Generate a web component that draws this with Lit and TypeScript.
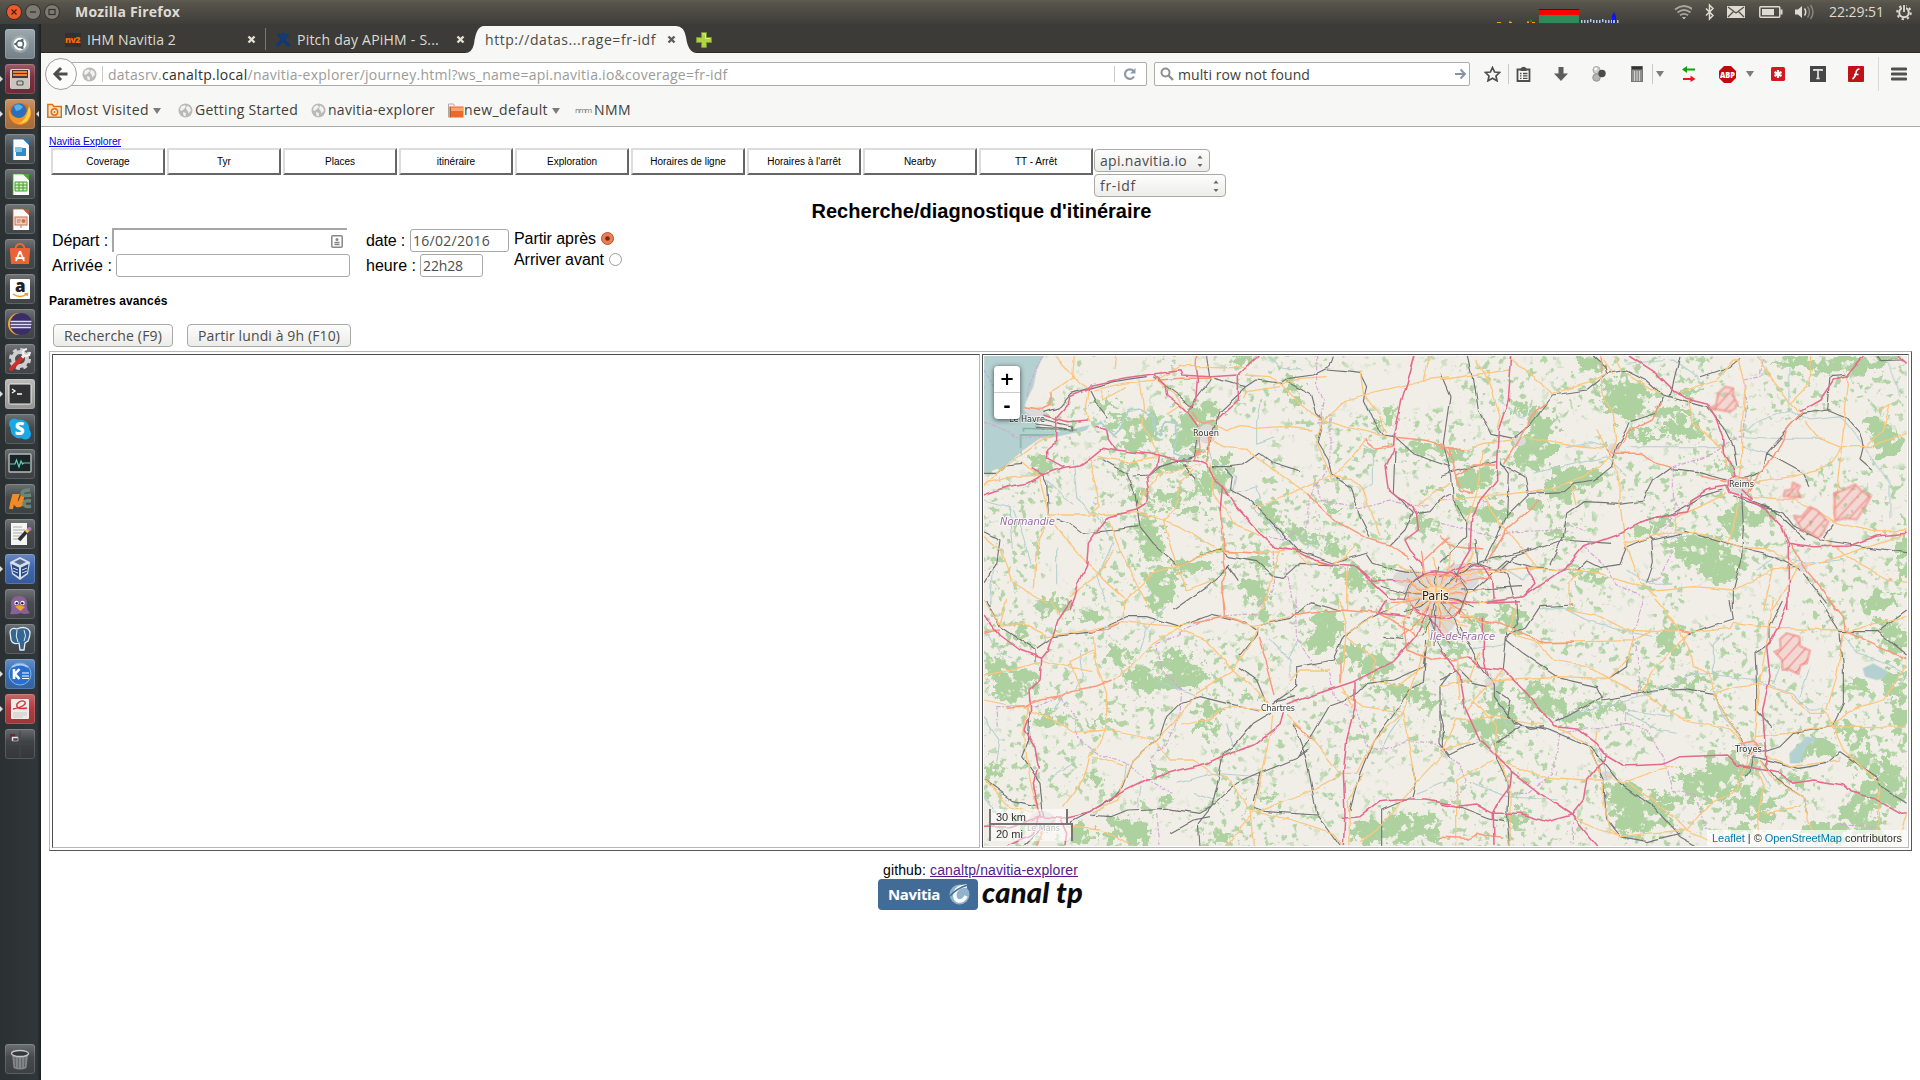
import { LitElement, html, svg, css } from "lit";
import { customElement, property } from "lit/decorators.js";
import { unsafeSVG } from "lit/directives/unsafe-svg.js";

/** Single line of text whose tracking is adjusted to fill a given width. */
@customElement("fit-text")
export class FitText extends LitElement {
  @property({ type: Number }) w = 0;
  static styles = css`
    :host { display: inline-block; white-space: pre; flex: none; }
  `;
  firstUpdated() {
    const span = this.renderRoot.querySelector("span")!;
    const n = (this.textContent ?? "").length;
    const natural = span.getBoundingClientRect().width;
    if (n && this.w) this.style.letterSpacing = `${(this.w - natural) / n}px`;
  }
  render() {
    return html`<span><slot></slot></span>`;
  }
}

const pic = (w: number, h: number, body: string, vb = `0 0 ${w} ${h}`) =>
  html`<svg width=${w} height=${h} viewBox=${vb} fill="none">${unsafeSVG(body)}</svg>`;

/* ------------------------------------------------------------------ map */

interface Sheet {
  at: string;
  wood: string;
  rail: string;
  primary: string;
  trunk: string;
  motor: string;
  stream: string;
  border: string;
  zone: string;
}

const NW: Sheet = {
  at: "scale(.33333) translate(-12 -18)",
  wood: "790,25,35,18 480,235,48,38 460,275,40,18 615,255,22,48 670,200,44,26 690,180,45,16 585,350,46,16 600,290,26,26 720,380,26,38 690,400,48,20 625,430,55,10 550,440,45,16 540,475,30,10 170,330,32,18 200,345,20,14 370,160,36,12 410,210,30,10 640,490,40,12 500,540,28,36 520,590,34,34 545,690,52,40 540,750,40,28 860,480,30,24 890,520,22,18 940,120,26,22 1020,570,45,16 1070,600,45,12 1340,295,46,20 1230,190,20,16 1190,230,26,12 1360,410,22,16 1230,650,30,14 1100,670,36,18 1150,700,36,22 640,650,45,20 840,640,36,12 820,715,40,18 950,555,36,16 1060,480,30,8 1330,520,46,18 450,355,28,12 470,440,18,24 740,320,22,12 660,310,18,18",
  rail: "190,185 240,170 275,130 325,115 400,95 500,80|330,120 350,160 385,205|520,80 560,110 600,140 640,175 645,150 690,90 680,18|700,85 800,110 830,90 905,100 925,85 1000,75 1050,50 1060,20|1040,60 1100,65 1140,70 1160,110 1150,150 1175,205 1210,255 1245,260 1300,310 1350,330 1410,350|920,95 995,135 1010,190 1030,210 1015,280 1045,330 1055,375 1110,410 1140,500 1170,560|800,110 720,185 690,260 685,300|12,370 50,370 80,345 130,340|205,495 200,400 185,370|370,330 440,370 465,430 475,500 480,530 520,580 595,648|530,350 580,335 640,320 650,270|455,378 510,375 540,350|595,648 650,620 720,600 745,620 830,635 880,680 910,685 960,640 1060,645|610,340 630,370 650,390|690,350 750,350 790,345 840,310 880,340 960,365|735,355 760,380 755,420 800,445 850,490 910,555 950,600 1060,640 1160,610 1180,640 1230,655 1320,670|230,510 270,520 310,550 400,540 475,530|12,545 60,570 50,640 12,700|1310,490 1350,485 1390,440 1410,430|1230,585 1275,540 1300,490 1240,430 1245,300|580,780 680,710 750,645|745,650 775,695|155,215 200,210 275,228 275,240 170,235|165,225 260,236|185,205 245,222",
  primary: "12,410 60,360 130,310 190,265 225,260|230,18 280,80 240,110 205,130|280,18 275,80 325,115|410,18 405,60|340,120 430,100 530,90 600,50 770,50 800,60|325,115 315,180 330,215|480,90 490,170 490,220 520,290 540,315|530,90 590,140 620,185|795,75 870,80 905,105 950,150 985,180 1030,210 1010,280 1050,370 1060,400|1030,210 1090,230 1160,245 1220,260|1030,210 1100,150 1150,135 1200,125 1330,90 1410,80|1140,60 1150,130 1200,200 1220,250|1060,380 1120,320 1160,265|1050,380 1110,385 1150,420 1170,480 1200,560|1055,375 965,415 880,450 810,475|685,265 740,290 800,295 840,330 960,415 990,435|700,225 740,245 780,230 830,235 900,230 1000,240|690,340 700,430 740,480 760,520 850,560|640,360 600,400 585,480 550,510 593,650|475,488 550,510 600,530 680,580 715,600|12,400 100,380 185,375|205,495 340,495 475,488|205,495 260,570 330,650 440,750|205,495 190,540 165,610 160,720|325,318 350,420 360,470 330,490|130,340 180,385 205,495|350,320 440,335 530,320|715,605 650,620 593,650 520,670 440,750|715,605 820,608 930,600|945,602 980,640 1040,640|1060,640 1100,620 1125,590|385,510 420,600 450,660 510,780|12,560 60,600 100,700 200,760|593,650 620,720 700,690|1410,400 1360,430 1310,470|1330,90 1345,18|470,480 485,440 540,370 650,345|900,600 870,700 850,780|1100,650 1100,780|270,740 350,680 400,600|790,145 800,125 900,110|905,105 960,85 1040,80|600,165 560,190|360,120 370,150 440,110",
  trunk: "130,170 180,178 210,165 210,130|650,18 648,60|655,215 670,220 700,210|655,245 660,290 650,325|685,245 688,300 680,340|720,480 730,560 732,630 740,670 722,700 735,780|985,435 1030,480 1080,520 1160,565 1230,585 1290,625|1160,265 1185,295 1240,285|1245,262 1330,270 1390,285 1410,320|735,604 840,610|1325,640 1410,560|540,90 600,85 690,85|640,190 655,215|640,330 650,300 680,305",
  motor: "12,435 80,410 140,400 185,375 250,352 300,345 330,325 370,292 410,300 450,305 535,315 600,330 650,333 680,345 700,385 727,412 760,460 800,505 850,560 885,592 945,602 1000,630 1060,645 1130,650 1180,690 1240,692 1300,700|185,375 155,355|250,352 200,325 200,300 230,275 230,200 265,160 270,140 325,118 335,105 430,85 520,72 600,62 605,75 690,80 775,75 835,18|775,75 775,150 735,185 710,210|520,72 555,105 560,135 600,165 625,190 655,230|650,60 655,90 650,150 625,190|190,195 265,215 325,210|345,228 380,240 385,265 410,300|535,315 530,350 500,385 505,420 495,465 470,480 385,500 360,530 325,580 320,650 295,700 285,740 270,780|727,412 720,480|1305,18 1290,70 1265,150 1255,200 1243,255 1240,300 1215,350 1225,420 1250,440 1290,465 1310,495 1315,540 1275,570 1290,600 1325,640 1330,680|1130,650 1180,700 1230,745 1290,750",
  stream: "345,228 360,215 400,255 420,235 445,185 480,180 520,200 525,240 545,255 555,215 590,220 590,270 585,310 620,325 640,310 660,260 680,240 690,300 700,340 740,350 770,380 760,430 830,410 840,440 810,470 870,520 920,580 980,560 1000,570 980,600|840,160 830,210 830,280 880,260|280,330 290,440 330,490|200,390 250,440 280,460|12,450 90,470 100,600|870,20 900,50 960,60|1150,280 1180,300 1180,400 1150,420|100,480 130,560 150,640|350,500 400,580 350,680 380,760|40,660 30,780|230,590 230,700",
  border: "1010,18 1010,100 1030,150 1020,220 1050,190 1050,350 1015,400 1020,450 1130,475 1230,450 1290,470 1350,465|1010,400 985,470 980,530 910,570 860,560|880,600 880,720 830,780|920,650 940,780|190,18 165,70 140,140|12,215 120,265 220,255",
  zone: "",
};

const NE: Sheet = {
  at: "translate(456 -6) scale(.33333)",
  wood: "550,130,65,42 560,180,56,24 310,220,42,34 280,300,56,44 240,330,28,22 100,390,52,30 150,485,45,30 70,480,36,26 410,380,66,30 360,420,46,26 280,460,28,18 730,235,55,26 690,180,50,18 890,510,42,40 960,500,40,22 790,600,75,38 840,650,55,40 700,580,36,14 1340,280,34,44 1300,220,28,26 1100,40,46,16 1060,30,46,12 1260,50,56,16 1200,40,46,20 750,130,36,12 600,550,36,12 660,520,36,12 1390,620,14,70 480,690,28,16 60,320,28,18 350,550,28,12 450,50,36,16 250,170,26,12 620,260,60,10 1320,755,56,22 430,670,36,12 840,350,26,14 1390,520,12,20 1340,30,40,14",
  rail: "85,18 100,80 115,180 150,250 220,265|0,70 30,140 10,280 35,380 40,450 80,520 80,560 0,640|220,265 270,225 340,135 440,120 500,70 560,60 620,90 670,135 690,140 720,18|690,140 800,170 850,230 880,290 890,350|670,140 650,190 570,215 560,245 530,290 515,350 465,390 400,400 370,425 270,430 200,500|180,335 205,370 200,500 130,640|180,340 255,380 265,430|0,380 60,360 170,335|860,390 770,365 690,355 640,390 610,450 540,460 430,455 380,490 370,560 330,640|905,385 970,360 980,310 1060,220 1090,190 1160,180 1220,205 1260,250 1270,290 1260,330 1295,360|980,310 1090,370 1110,410|850,420 780,440 700,490 600,520|905,430 910,530 905,620 880,720 880,780|930,450 1030,490 1060,530 1140,570 1400,608|880,440 1000,480 1095,570|780,80 870,50 900,25|1160,180 1170,80 1230,75|1090,670 1160,760|1080,660 1000,620 870,585 740,545 640,570 630,560 560,590 540,640 480,650 440,630 410,660 270,650 200,630 100,720|510,580 370,570 220,620 180,660|635,570 640,640 620,700|0,720 100,640 270,600|1180,520 1150,565|60,720 250,710|460,18 495,50 500,70|1310,18 1320,32 1390,30|105,570 110,640 200,670 220,740",
  primary: "0,90 130,70 210,60|210,25 340,130|340,130 440,100 500,70|110,30 150,100 180,200 170,240|485,75 485,130 520,190 530,270 515,310|560,70 660,130|745,150 760,220 850,300 860,360|710,130 830,90 880,30 900,30|895,30 915,110 905,250 905,340 895,390|950,18 1000,100 1050,160 1080,185|1205,290 1215,190 1225,100 1210,60|1095,215 1130,260 1205,290 1300,290 1400,250|1205,290 1160,350 1060,380 940,395|1205,290 1180,500|70,300 130,280 220,270|250,260 400,285 490,295|515,320 430,380 350,410 270,425 130,440 0,450|515,320 540,400 540,460 555,580 600,700 650,740|130,300 110,430 80,520|130,440 190,530 290,650|405,465 390,400|940,440 1060,450 1130,480 1180,515 1300,545 1400,540|893,440 885,500 865,575|705,545 710,500 800,460 860,430|555,580 600,570 630,560 700,545 800,555 900,595 1000,600 1070,650|1090,650 1200,620 1280,590 1400,550|1150,570 1250,640 1340,690 1400,700|230,655 370,655 480,670 600,710|640,720 760,710 880,720 1000,660 1080,650|415,660 390,700 390,780|290,650 200,660 0,680|1000,780 1070,650|470,235 500,300|1115,18 1110,100 1050,160|520,18 540,60|480,18 520,75|1320,180 1350,160 1330,240 1280,290|970,780 1000,660",
  trunk: "0,290 70,300|25,290 50,380 60,420 100,430|165,345 100,345 50,380|190,340 235,270 285,185 320,160|500,300 515,320|530,300 570,245 640,210 665,160|480,18 485,70|515,310 600,310 650,340 700,355|780,378 860,395|940,390 1000,320 1050,230 1090,185|1050,580 1090,650 1150,720 1190,780|300,450 200,540 140,640|60,660 200,655|0,560 50,590 130,600|875,380 920,385 940,400 920,430",
  motor: "215,18 205,150 175,240 170,340 170,390 120,450 95,510 90,600 60,650|570,18 650,70 700,120 740,145 800,160 830,210 848,260 850,310 880,360 885,380 865,395 865,410|1270,18 1220,80 1180,90 1140,150 1080,185|860,408 800,420 750,450 740,485 690,495 600,520 530,555 430,590 390,640 350,670 250,740 120,760 0,745|860,408 870,430 920,445 980,480 1025,530 1045,580 1045,700 1043,780|1045,580 1120,590 1230,588 1310,558 1400,550|1375,18 1400,40|60,650 45,700|0,680 90,640 130,650 155,690 160,750|255,650 285,700 250,740|905,418 935,445",
  stream: "1050,50 1045,180 940,220 920,240|1050,180 1110,210 1200,200 1280,300 1350,400 1350,500|905,260 1000,265 1150,265|910,290 990,310|180,150 240,200 290,190|380,290 450,275 500,290|560,290 700,290 830,290 850,280|280,370 500,320 560,380|560,40 700,30 770,80 790,110|200,660 250,690 280,640|950,660 1000,620 1100,640 1200,630|1340,20 1370,100 1380,140|560,660 620,700 700,700|660,560 760,560",
  border: "970,30 960,80 910,90 920,170 910,260 860,280 800,320 700,350 700,440 720,480 650,550|0,520 80,540 160,560 230,545 360,540 380,520 440,540|430,590 500,650 530,700 600,740|700,600 660,680 620,700",
  zone: "810,175 828,165 835,130 855,110 880,115 878,135 892,160 885,175 870,185 840,180|1030,438 1035,422 1055,418 1058,398 1080,408 1072,422 1082,442 1050,440|1062,498 1085,500 1110,470 1130,480 1165,515 1150,545 1135,565 1110,548 1085,540|1183,430 1215,418 1245,403 1262,420 1292,440 1275,470 1250,508 1215,505 1185,512",
};

const SW: Sheet = {
  at: "translate(-4 244) scale(.33333)",
  wood: "210,20,46,20 320,50,42,22 120,85,28,18 60,200,34,24 110,240,62,30 90,280,46,18 420,165,32,26 460,230,26,32 510,250,34,30 590,200,52,34 640,230,46,28 570,250,36,16 210,360,46,22 370,365,32,12 680,330,36,26 680,385,36,10 1040,70,44,36 1020,120,36,34 1140,170,52,28 1200,200,40,26 1100,150,28,16 1160,245,26,16 40,510,28,16 440,680,52,26 460,700,44,30 380,705,26,16 720,710,36,16 300,700,26,26 860,590,22,12 1160,690,50,34 1270,670,55,28 1330,690,46,30 1240,700,55,30 850,20,18,34 1270,270,56,18 1330,300,40,16 820,290,28,10 540,520,22,12 550,600,22,16 345,530,14,18 1330,60,20,14",
  rail: "20,0 60,80 165,150 165,185|150,330 145,420 125,470 180,550 190,650|170,145 220,110 340,95 440,50 500,50 600,80 690,45 800,70 830,90 830,100 780,165|840,75 930,55 990,5|780,205 830,240 855,300|840,330 740,310 660,290 600,310 560,350 540,410 460,480 430,560 395,600 270,665|870,340 820,370 760,440 730,460 710,560 695,620 660,640 560,625 440,630 390,650 330,645|695,620 770,550 850,515 950,475 1000,400 1050,315 1120,290 1160,250 1240,240 1330,200 1335,150|940,375 980,480 1010,640 1080,738|820,600 840,520|660,738 655,670 695,620|570,700 640,660 690,650|820,620 860,635 1010,645|880,310 950,260 950,200 1060,180 1090,110 1160,60 1220,30|1340,120 1330,250 1290,270 1180,420 1140,520 1110,630|1410,220 1380,260 1380,350 1380,430 1410,470|1205,738 1205,630 1300,590 1310,540 1300,500|12,540 100,605 170,620|990,5 1080,30|1320,0 1290,40|890,305 945,290|1210,112 1270,118|950,475 985,450|130,738 180,690",
  primary: "12,300 135,325 200,350 280,400 380,390 530,420|380,390 380,280 345,180 340,110|60,75 130,70 200,110 330,90 430,65 480,70 590,80 640,70|590,85 520,130 450,200 400,240|590,85 680,120 760,210 870,310|340,150 270,185 300,270|185,180 240,195 340,215|12,225 100,210 180,185|430,60 430,0|740,50 820,80 840,75 930,50|835,80 810,130 760,210 700,250 650,280 590,360 520,430 460,480 410,600 340,640|600,375 680,360 720,330 780,318 860,330|380,390 330,465 310,540 250,620|330,465 430,500|530,430 570,480 640,480 700,520 740,530 810,630 820,738|875,345 870,400 840,540 815,640|1080,0 1100,80 1090,190 1080,250|820,635 940,660 1060,700 1085,738|830,640 920,600 1000,570 1075,530|920,345 1000,420 1080,520 1130,520 1180,420 1270,335 1310,220 1340,130|1270,335 1290,440 1310,545 1410,440|1310,550 1200,680 1140,725|1085,275 1150,320 1260,335|12,540 90,620 160,640|150,300 130,400 150,540 180,650|930,240 960,210 1050,210|1100,100 1180,50|1110,738 1105,600 1150,520|260,680 360,690 450,730|740,738 810,650|1170,240 1250,260 1330,200|80,0 60,75|0,-20 60,75|210,0 250,60|1100,110 1190,180 1170,240|1085,260 1120,320",
  trunk: "12,100 60,90|80,325 135,320 180,300 240,290 270,272 350,258 395,240|420,68 380,85 330,95|640,70 735,50 800,75|730,0 733,45|835,110 860,190 885,285|935,45 1000,35 1080,30 1195,40 1290,90 1310,110|1080,180 1080,250|1000,420 940,370|1270,60 1280,150 1360,180 1410,175|170,738 190,690 220,660",
  motor: "275,0 235,60 205,150 185,175 180,240 150,270 155,330 135,390 165,440 175,500 160,550 175,620 180,650 245,655 330,635 420,580 500,540 600,510 680,490 740,462 830,430 900,375 910,335|12,45 60,105 120,150 185,175|920,315 1000,285 1120,245 1240,185 1310,105 1340,40 1350,0|1125,245 1125,320 1100,420 1090,520 1095,640 1090,738|1085,655 1140,650 1200,605 1250,600 1340,600 1410,612|12,682 90,680 180,650|240,655 260,700 255,738|80,738 160,700 175,650|1350,60 1410,130|1195,40 1290,50|1220,0 1195,40",
  stream: "12,80 60,160 100,170|300,150 310,230 280,270|170,0 190,40|560,20 500,90 480,150|530,240 600,270 650,290|440,490 430,560 340,650|740,370 760,440|590,550 700,520 840,530|480,560 470,620|12,590 60,650|200,540 280,490|950,120 920,180|870,120 930,180 930,230|1200,460 1230,400 1270,340|1310,580 1410,540|12,350 60,420 50,490|640,580 700,600|260,270 220,330",
  border: "55,380 50,320 170,320 240,290 285,340 290,410 370,470 440,490 500,540 580,580|600,100 530,130 545,210 605,270 600,340 560,430 510,480 530,530|530,640 540,738|945,0 950,120 1000,190 1050,220 1060,290 1130,330 1160,440 1230,450 1280,420 1350,430 1410,450|830,40 700,50 590,100",
  zone: "",
};

const SE: Sheet = {
  at: "translate(456 244) scale(.33333)",
  wood: "40,145,32,18 120,65,28,18 210,50,36,36 230,90,36,12 690,120,30,44 290,280,52,34 330,300,52,38 160,290,22,44 130,370,52,26 180,360,46,34 150,420,46,22 350,330,28,18 400,350,46,14 480,320,56,10 630,262,36,8 770,250,56,14 850,530,54,44 790,560,60,40 900,500,54,22 720,520,36,16 820,480,36,12 950,600,44,30 900,620,36,20 1140,440,42,26 1080,470,26,16 1270,480,46,26 1310,500,52,30 1380,350,22,70 1370,120,32,36 1330,80,18,18 1240,400,36,30 1300,590,60,34 1240,640,36,26 1160,700,52,30 1360,560,36,50 1290,680,46,26 1060,540,46,16 580,600,60,44 620,650,70,34 560,670,46,26 690,600,36,16 230,660,24,22 1250,260,36,16 1360,240,34,34 910,690,36,16 970,650,36,12 540,580,40,30",
  rail: "230,0 235,70 200,120 250,160 360,235 470,260 490,300 600,280 640,270 730,265 820,280 870,370 920,440|490,290 430,320 350,365|200,100 190,210|200,110 260,80 300,20 400,15|510,235 560,200 562,170|1140,0 1200,95 1310,95 1400,30|1310,95 1400,165|1200,100 1210,200 1210,310 1175,380 1060,400 1020,440 960,460|1030,0 990,80 990,130 945,160 950,260 950,330 995,380|60,80 110,180 160,250 160,290 220,370 330,390 450,440 500,500 540,550 640,620 720,710 770,738|450,450 490,540 500,660 540,710 620,725 720,700|165,270 210,300 200,350 270,385 310,380|240,380 190,415 165,430 170,480 205,550 200,650 210,738|0,240 60,210 100,250 140,260|0,330 10,380 10,440 30,465 110,425|50,620 140,655 190,665|940,470 1080,505 1160,490 1200,455 1310,530 1320,560 1400,610|960,480 1010,540 1090,590 1100,640|940,470 935,500 915,530|870,0 880,60 740,105",
  primary: "190,90 240,110 300,128 580,122 630,95 720,92|720,95 755,170 760,200 810,220 820,270|645,0 720,90|380,30 480,50 560,90 640,95|740,100 870,85 880,70 1000,85 1210,90|1210,100 1300,70 1400,50|740,105 650,200 600,280|150,240 350,230 510,235 590,280|270,110 340,180 440,200 510,235|580,122 560,180 510,235|620,280 680,330 740,360 870,390 910,430|820,280 880,260 960,250 1050,280 1110,340 1160,340 1175,370|820,280 870,370 910,430|1000,0 985,100 960,240 945,420|1210,100 1190,230 1160,330|945,410 1040,400 1170,380 1400,385|1175,370 1260,320 1330,300 1400,200|1175,370 1210,450 1320,550|960,480 1000,540 1090,590 1100,640 1130,738|940,480 970,560 955,640 960,738|925,470 890,570 800,620 740,690|740,690 620,700 540,710 510,690 490,600 490,540|500,530 550,550 650,510 700,500|490,540 430,540 300,530 170,480|345,380 440,430 480,520|100,300 170,380 165,450 210,560 210,738|310,375 170,350 50,360 10,450|190,210 130,270 80,330|0,450 90,430|160,480 50,540 50,738|400,650 480,690 540,710|570,550 700,650 740,690 840,738|970,640 1080,620|1320,560 1310,738|980,470 1060,500 1200,480|1400,640 1370,738|0,60 80,80|470,395 465,440|50,180 60,300|120,160 90,240 0,260|210,80 230,20",
  trunk: "130,60 180,70 250,100 310,128 400,127|1170,0 1210,50 1215,90 1300,130 1400,180|20,40 35,20|900,430 940,420 960,450 920,470|0,712 80,715 110,700 150,710 190,715|720,92 745,100|85,170 30,180|60,50 130,60",
  motor: "0,150 60,230 75,320 120,420 215,515 300,580 395,645 470,738|85,170 120,200 190,210 260,280 345,380 415,388 470,430 500,468 550,498 670,493 720,470 860,465 890,495 975,510 1020,520 1060,550 1120,540 1210,555 1230,575 1310,598 1385,640 1400,638|500,468 440,540 430,600 395,645 320,665 240,640 160,640|215,515 210,560 180,600 160,640 162,738|0,612 50,622 110,615 160,640|1045,0 1015,80 980,140 990,230 968,330 975,430 978,500|130,50 130,170 145,230|0,8 130,10 240,5",
  stream: "340,370 430,330 500,320 600,290 700,250 760,220 830,225 950,240 1060,280 1110,330 1170,330|820,270 850,350 930,450|1210,110 1260,160 1400,220|300,30 360,20 440,60 540,90 640,110|0,130 100,150 200,130|150,220 200,380 300,380 480,450 500,540|820,220 820,130 850,100|560,340 650,390 710,400|1080,290 1110,200|1000,250 1020,200|400,350 470,320|950,490 990,560|100,550 200,590 350,600|560,330 700,350",
  border: "610,0 580,100 600,200 590,290|555,310 560,370 420,390 360,400 340,520 260,580 220,580|560,370 620,390 670,470 700,570 760,580 800,690|0,450 60,490 80,560 40,590|1200,670 1310,680|330,600 400,650 400,738",
  zone: "1003,155 1022,148 1020,118 1040,100 1078,110 1080,138 1110,152 1100,190 1082,195 1075,222 1045,208 1028,210 1025,178",
};

const path = (list: string) =>
  list
    .split("|")
    .filter(Boolean)
    .map((l) => "M" + l)
    .join("");
const rings = (list: string) =>
  list
    .split("|")
    .filter(Boolean)
    .map((l) => `M${l}z`)
    .join("");

const GROW = 1.14;
const woods = (s: Sheet) => {
  const blobs = s.wood
    .split(" ")
    .map((b) => b.split(",").map(Number))
    .map(([x, y, rx, ry]) => `<ellipse cx="${x}" cy="${y}" rx="${(rx * GROW).toFixed(1)}" ry="${(ry * GROW).toFixed(1)}"/>`)
    .join("");
  return `<g transform="${s.at}">${blobs}</g>`;
};
const lines = (s: Sheet, key: keyof Sheet) => `<path transform="${s.at}" d="${path(s[key])}"/>`;
const sheets = [NW, NE, SW, SE];
const all = (key: keyof Sheet) => sheets.map((s) => lines(s, key)).join("");

const parisSpokes = Array.from({ length: 34 }, (_, i) => {
  const a = (i / 34) * Math.PI * 2;
  const r = 28 + ((i * 17) % 26);
  const b = a + (i % 2 ? 0.18 : -0.14);
  const p = (ang: number, d: number) =>
    `${(452 + Math.cos(ang) * d * 1.15).toFixed(1)},${(239 + Math.sin(ang) * d).toFixed(1)}`;
  return { d: `M${p(a, 6)} ${p(b, r * 0.55)} ${p(a, r)}`, kind: i % 4 };
});
const spokes = (kind: number) => parisSpokes.filter((s) => s.kind === kind).map((s) => s.d).join("");

const MAP = `
<defs>
  <filter id="speck" x="0" y="0" width="100%" height="100%" color-interpolation-filters="sRGB">
    <feTurbulence type="fractalNoise" baseFrequency=".14" numOctaves="3" seed="8" result="fine"/>
    <feColorMatrix in="fine" values="0 0 0 0 .7  0 0 0 0 .83  0 0 0 0 .65  9 0 0 0 -5.2" result="a"/>
    <feTurbulence type="fractalNoise" baseFrequency=".018" numOctaves="2" seed="3"/>
    <feColorMatrix values="0 0 0 0 0  0 0 0 0 0  0 0 0 0 0  0 8 0 0 -3.1" result="m"/>
    <feComposite in="a" in2="m" operator="in"/>
  </filter>
  <filter id="ragged" x="0" y="0" width="923" height="490" filterUnits="userSpaceOnUse" color-interpolation-filters="sRGB">
    <feTurbulence type="fractalNoise" baseFrequency=".09" numOctaves="4" seed="5" result="n"/>
    <feDisplacementMap in="SourceGraphic" in2="n" scale="30" xChannelSelector="R" yChannelSelector="G" result="d"/>
    <feColorMatrix in="n" values="0 0 0 0 0  0 0 0 0 0  0 0 0 0 0  0 0 14 0 -4.2" result="h"/>
    <feComposite in="d" in2="h" operator="in"/>
  </filter>
  <filter id="wobble" x="0" y="0" width="923" height="490" filterUnits="userSpaceOnUse" color-interpolation-filters="sRGB">
    <feTurbulence type="fractalNoise" baseFrequency=".05" numOctaves="2" seed="2"/>
    <feDisplacementMap in="SourceGraphic" scale="5" xChannelSelector="R" yChannelSelector="G"/>
  </filter>
  <pattern id="hatch" width="26" height="26" patternUnits="userSpaceOnUse" patternTransform="rotate(42)">
    <rect width="5" height="26" fill="#f0706e" fill-opacity=".55"/>
  </pattern>
</defs>
<rect width="923" height="490" fill="#f1eee8"/>
<rect width="923" height="490" filter="url(#speck)"/>
<g filter="url(#ragged)" fill="#aed1a0">${sheets.map(woods).join("")}</g>
<g fill="#dcdad8">
  <ellipse cx="452" cy="236" rx="32" ry="22"/><ellipse cx="475" cy="222" rx="20" ry="14"/>
  <ellipse cx="425" cy="222" rx="16" ry="9"/><ellipse cx="458" cy="262" rx="14" ry="16"/>
  <ellipse cx="223" cy="78" rx="9" ry="10"/><ellipse cx="757" cy="131" rx="10" ry="9"/>
  <ellipse cx="48" cy="58" rx="14" ry="6"/><ellipse cx="767" cy="392" rx="10" ry="7"/>
  <ellipse cx="58" cy="466" rx="14" ry="11"/><ellipse cx="818" cy="211" rx="6" ry="5"/><ellipse cx="536" cy="85" rx="6" ry="5"/>
  <ellipse cx="508" cy="327" rx="7" ry="5"/><ellipse cx="630" cy="93" rx="6" ry="6"/><ellipse cx="622" cy="420" rx="6" ry="5"/>
</g>
<g transform="${NW.at}"><path fill="#b5d0d0" d="M12,18 190,18 170,60 160,110 140,150 130,180 160,205 190,240 240,245 330,225 320,240 230,260 180,265 130,300 80,345 12,372z"/>
  <path d="M130,235 290,240 M122,295V255H225M130,235V245" stroke="#7fb39b" stroke-width="4"/><path d="M12,60C50,120 60,160 120,190" stroke="#8b96e0" stroke-width="2" stroke-dasharray="10 6"/></g>
<g transform="${SE.at}" fill="#b5d0d0"><path d="M1268,205 1300,190 1345,215 1330,235 1310,240 1275,230z"/><path d="M1048,460 1100,410 1135,415 1100,440 1080,490 1050,490z"/></g>
<g filter="url(#wobble)"><g stroke-linejoin="round">
  <g stroke="#b5d0d0" stroke-width="3.2">${all("stream")}</g>
  <g stroke="#d3a6d6" stroke-width="3.4" stroke-dasharray="14 5 5 5">${all("border")}</g>
  <g stroke="#747474" stroke-width="3.4">${all("rail")}</g>
  <g stroke="#fcc67c" stroke-width="3.8">${all("primary")}</g>
  <g stroke="#fb9a78" stroke-width="4.4">${all("trunk")}</g>
  <g stroke="#e5698b" stroke-width="4.6">${all("motor")}</g>
  <g stroke="#aed1d0" stroke-width="5"><path transform="${NW.at}" d="M345,228 360,215 400,255 420,235 445,185 480,180 520,200 525,240 545,255 555,215 590,220 590,270 585,310 620,325"/></g>
</g>
<path d="${spokes(0)}" stroke="#fb9a78" stroke-width="1.3"/>
<path d="${spokes(1)}${spokes(3)}" stroke="#fcc67c" stroke-width="1.4"/>
<path d="${spokes(2)}" stroke="#747474"/>
<ellipse cx="452" cy="238" rx="13" ry="9" fill="#f7dcb4" stroke="#fcc67c" stroke-width="1.6"/>
<path d="M440,232 464,244M444,246 460,230M452,228V248M438,239H466" stroke="#fcb868" stroke-width="1.4"/>
<path d="M424,240Q426,224 440,220T470,222Q484,230 482,244T462,260Q440,262 430,254z" stroke="#fb9a78" stroke-width="1.2"/>
<path d="M430,226Q440,214 458,216T482,228M428,250Q440,262 456,263T478,252" stroke="#e5698b" stroke-width="1.4"/>
<path d="M452,250 450,290M446,262 452,282 462,300M440,218 425,230 420,244M470,216 484,236 476,258" stroke="#747474"/>
</g>
${[NE, SE]
  .map(
    (s) =>
      `<g transform="${s.at}" stroke-linejoin="round"><path d="${rings(s.zone)}" fill="#f6a9a4" fill-opacity=".32" stroke="#f3918e" stroke-opacity=".6" stroke-width="8"/>
       <path d="${rings(s.zone)}" fill="url(#hatch)"/></g>`
  )
  .join("")}
`;

const label = (x: number, y: number, w: number, t: string, cls = "town") =>
  svg`<text class=${cls} x=${x} y=${y} textLength=${w} lengthAdjust="spacingAndGlyphs">${t}</text>`;

@customElement("area-map")
export class AreaMap extends LitElement {
  static styles = css`
    :host { display: block; position: relative; width: 923px; height: 490px; overflow: hidden; font: 11px/15px "Liberation Sans", sans-serif; color: #333; }
    svg { display: block; }
    text { font-family: "DejaVu Sans", sans-serif; paint-order: stroke; stroke: #ffffffb0; stroke-width: 2px; stroke-linejoin: round; }
    .town { font-size: 9px; fill: #333; }
    .city { font-size: 11.5px; fill: #222; }
    .region { font-size: 10.5px; font-style: italic; fill: #9a6ba6; stroke: #ffffffd0; }
    .faint { font-size: 8.5px; fill: #777; }
    .zoom { position: absolute; left: 10px; top: 10px; width: 26px; border-radius: 4px; background: #fff; box-shadow: 0 1px 5px rgba(0, 0, 0, .65); color: #000; font: bold 18px/26px "DejaVu Sans", sans-serif; text-align: center; }
    .zoom div { height: 26px; }
    .zoom div + div { border-top: 1px solid #ccc; }
    .scale { position: absolute; left: 5px; bottom: 5px; }
    .bar { box-sizing: border-box; height: 16px; padding: 1px 5px 0; line-height: 14px; border: 2px solid #777; background: rgba(255, 255, 255, .5); }
    .km { width: 79px; border-top: 0; }
    .mi { width: 84px; border-bottom: 0; border-top: 2px solid #777; margin-top: -2px; height: 18px; padding-top: 2px; }
    .credit { position: absolute; right: 0; bottom: 0; width: 200px; height: 16px; box-sizing: border-box; padding: 1px 5px 0; background: rgba(255, 255, 255, .7); }
    .credit a { color: #0078a8; }
  `;
  render() {
    return html`<svg width="923" height="490" viewBox="0 0 923 490" fill="none">
        ${unsafeSVG(MAP)}
        ${label(25, 66, 36, "Le Havre")} ${label(209, 80, 26, "Rouen")} ${label(745, 131, 25, "Reims")}
        ${label(751, 396, 27, "Troyes")} ${label(277, 355, 34, "Chartres")} ${label(43, 475, 33, "Le Mans", "faint")}
        ${label(438, 243.5, 27, "Paris", "city")} ${label(16, 168.5, 55, "Normandie", "region")}
        ${label(446, 284, 65, "Île-de-France", "region")}
      </svg>
      <div class="zoom"><div>+</div><div>-</div></div>
      <div class="scale"><div class="bar km">30 km</div><div class="bar mi">20 mi</div></div>
      <div class="credit"><fit-text w="190"><a>Leaflet</a> | © <a>OpenStreetMap</a> contributors</fit-text></div>`;
  }
}

/* ---------------------------------------------------------------- icons */

const GLOBE = (r = 7) =>
  pic(r * 2 + 1, r * 2 + 1, `<circle cx="7.5" cy="7.5" r="7" fill="#b9b9b7"/><path d="M3 3.5 6.5 2 8 4 5.5 6.5 3.5 8 2 7zM9 2.5l3 2 1 3-2.5 3-1-3L8 6zM5 9l3 1-.5 3.5-2-1z" fill="#f2f2f0"/>`, "0 0 15 15");
const TRI = pic(8, 6, `<path d="M0 0H8L4 6z" fill="#7c7c78"/>`);
const CLOSE = (c: string) => pic(9, 9, `<path d="M1.5 1.5 7.5 7.5M7.5 1.5 1.5 7.5" stroke="${c}" stroke-width="2.4"/>`);

const doc = (c: string, inner: string) =>
  `<path d="M8 5H18L24 11V26H8z" fill="#fbfbfb"/><path d="M18 5H24V11z" fill="${c}"/><path d="M8 26V5H18" stroke="${c}" stroke-width=".8"/>${inner}`;

const TILES: { bg: string; art: string; left?: boolean; right?: boolean }[] = [
  { bg: "#85929a", art: `<circle cx="15" cy="15" r="9" fill="#aab4b9" opacity=".6"/><circle cx="15" cy="15" r="6.5" fill="#fff"/><circle cx="15" cy="15" r="3.4" stroke="#56646c" stroke-width="1.6"/><circle cx="10.5" cy="15" r="1.3" fill="#56646c"/><circle cx="17.3" cy="11.1" r="1.3" fill="#56646c"/><circle cx="17.3" cy="18.9" r="1.3" fill="#56646c"/>` },
  { bg: "#7e2f40", left: true, art: `<rect x="5" y="5" width="20" height="20" rx="2" fill="#d5d2cd"/><rect x="7" y="6" width="16" height="8" fill="#4b3a32"/><path d="M8 8h14M8 11h14" stroke="#f08436" stroke-width="2"/><rect x="6" y="14" width="18" height="11" fill="#c9c6c2"/><rect x="12" y="17" width="6" height="4" rx="1" stroke="#555" stroke-width="1.2"/>` },
  { bg: "#b87942", left: true, right: true, art: `<circle cx="15" cy="15" r="11" fill="#e66a1c"/><circle cx="14" cy="12.5" r="8" fill="#2b6fbb"/><path d="M9 7q5-4 9 1l-3 3-4 1z" fill="#56b3e6"/><path d="M4 10q2 8 9 9 6 0 8-5l3-6q4 8-1 14-7 7-15 1-5-5-4-13z" fill="#f1952b"/><path d="M24 7q4 8-2 15-4 3-9 3 9-3 11-18z" fill="#fbd24a"/>` },
  { bg: "#4a4f51", art: doc("#2a7ab8", `<rect x="11" y="14" width="10" height="8" fill="#2e8cc7"/><rect x="10" y="13" width="7" height="5" fill="#83c2e6"/>`) },
  { bg: "#4a4f51", art: doc("#43b02a", `<rect x="10" y="13" width="12" height="9" fill="#d4efc8"/><path d="M10 13h12v9H10zM10 16h12M10 19h12M14 13v9M18 13v9" stroke="#43a02a"/>`) },
  { bg: "#4a4f51", art: doc("#b15f3f", `<rect x="10" y="13" width="12" height="8" fill="#f0cdbd" stroke="#bf7556"/><path d="M12 16h4M12 18h3M16 21v3" stroke="#bf7556"/><circle cx="18.5" cy="17" r="2" fill="#c9704c"/>`) },
  { bg: "#484d4f", art: `<path d="M10.5 10Q11 5 15 5T19.5 10" stroke="#e8663c" stroke-width="2"/><path d="M5 9H25V12L24 25H6L5 12z" fill="#ea6235"/><path d="M15 12 11 22M15 12 19 22M10.500 19H19.500" stroke="#fff" stroke-width="1.8"/>` },
  { bg: "#484d4f", art: `<rect x="5" y="5" width="20" height="20" rx="1" fill="#fff"/><text x="10" y="18" font-family="Open Sans" font-weight="800" font-size="17" fill="#222">a</text><path d="M8 20q7 5 14 0M19.5 20l3-.5-.5 2.5" stroke="#f09a24" stroke-width="1.4"/>` },
  { bg: "#484d4f", art: `<circle cx="14" cy="15" r="11" fill="#f2a33a"/><circle cx="16" cy="15" r="11" fill="#3b2e68"/><path d="M5.5 12.500H26.500M5.500 15.500H26.500M6 18.500H26" stroke="#dcdcf2" stroke-width="1.5"/>` },
  { bg: "#4b4f51", art: `<circle cx="15" cy="15" r="7" stroke="#cfcfcf" stroke-width="4"/><circle cx="15" cy="15" r="9.500" stroke="#cfcfcf" stroke-width="3" stroke-dasharray="4 3.460"/><path d="M6 25 18 13" stroke="#cf2c2c" stroke-width="4" stroke-linecap="round"/><path d="M17 13.500l3-3" stroke="#f2f2f2" stroke-width="3"/><path d="M22 5q-5 1-4 5 2 3 6 1l1-3" stroke="#f2f2f2" stroke-width="2.200"/>` },
  { bg: "#a8a8a6", left: true, art: `<rect x="4" y="5" width="22" height="20" rx="1.5" fill="#2f3133" stroke="#efefef"/><path d="M7 10l3 2-3 2M12 15h5" stroke="#fff" stroke-width="1.3"/>` },
  { bg: "#44494b", art: `<circle cx="15" cy="15" r="9.5" fill="#19a9e5"/><circle cx="9.5" cy="10" r="5.5" fill="#19a9e5"/><circle cx="20.5" cy="20" r="5.5" fill="#19a9e5"/><text x="9.7" y="21" font-family="Open Sans" font-weight="800" font-size="17" fill="#fff">S</text>` },
  { bg: "#44494b", art: `<rect x="4" y="5" width="22" height="18" rx="1" fill="#182427" stroke="#b9b9b9" stroke-width="1.4"/><path d="M5 15h5l1.5-4 2.5 7 2-6 1.500 3 1-1H25" stroke="#66d2b4" stroke-width="1.200"/>` },
  { bg: "#44494b", art: `<path d="M6 25Q7 19 9 12H12Q10 18 11 20 15 21 18 11" stroke="#f28b25" stroke-width="4"/><path d="M11 21Q17 23 19 16" stroke="#f28b25" stroke-width="3.500"/><path d="M25 6q-8 0-8 3.500 1 3 9 1.500M26 17q-6-1-7 2 0 5 7 3" stroke="#6b8678" stroke-width="3.500"/>` },
  { bg: "#494d4f", art: `<rect x="6" y="4" width="16" height="22" fill="#f4f4f2"/><path d="M8 8h9M8 11h12M8 14h9M8 17h7M8 20h6" stroke="#aaa"/><path d="M14 21 22 12" stroke="#2f2f2f" stroke-width="3.5"/><path d="M21 13l2.5-2.500" stroke="#f1c24a" stroke-width="3.5"/><circle cx="24.5" cy="10" r="2" fill="#b07ab8"/>` },
  { bg: "#4066ad", left: true, art: `<path d="M15 3 25 8 23 20 15 26 7 20 5 8z" fill="#d5dfee"/><path d="M6.5 10 14 13.500V23L8 19zM23.500 10 16 13.500V23L22 19z" fill="#294a80"/><path d="M15 5 21 8 15 11 9 8z" fill="#55698c"/><path d="M8 14l5 2M8 17l5 2M22 14l-5 2M22 17l-5 2" stroke="#d5dfee"/>` },
  { bg: "#494c50", art: `<path d="M5 25Q7 21 6 15 6 7 14 7 22 7 22 15 21 20 25 24 19 26 16 24 10 26 5 25z" fill="#87619a"/><circle cx="11.500" cy="14" r="2.200" fill="#fff"/><circle cx="17.500" cy="14" r="2.200" fill="#fff"/><circle cx="11.700" cy="14.300" r="1.200" fill="#222"/><circle cx="17.300" cy="14.300" r="1.200" fill="#222"/><path d="M10 17.500l5-1.500 5 2-4.500 4z" fill="#f5a12b"/>` },
  { bg: "#444a4e", art: `<path d="M5 8Q6 3 12 5 18 2 23 5 27 8 23 17L20 19 19 26H15L14 19Q8 21 6 16z" fill="#336791" stroke="#e6edf3" stroke-width="1.3"/><path d="M12 6Q10 12 13 18M19 6Q22 12 19 17" stroke="#e6edf3"/>` },
  { bg: "#3b6fb0", left: true, art: `<circle cx="15" cy="15" r="11" fill="#2a6fd0" stroke="#7fb3f0"/><path d="M7 8q8-5 16 0" stroke="#a9cdf8" stroke-width="2"/><path d="M9 10v10M14.5 10 10 15l4.500 5" stroke="#fff" stroke-width="2.6"/><path d="M17 14h7M17 17h7M17 19.500h7" stroke="#fff" stroke-width="1.2"/>` },
  { bg: "#b13d42", left: true, art: `<rect x="6" y="5" width="18" height="20" rx="1" fill="#eeece9"/><path d="M8 19h14M8 21h14M8 23h10" stroke="#c4c4c4" stroke-width=".9"/><path d="M8 15Q22 12 20 8 16 5 12 10 10 16 22 14" stroke="#d8363b" stroke-width="1.4"/>` },
  { bg: "#3c4042", art: `<rect x="5" y="5" width="5" height="4" fill="#5b2b45"/><path d="M7.500 12V8.500H13" stroke="#e6e1e4" stroke-width="1.400"/><path d="M7.500 12H13V8.500" stroke="#a99aa3" stroke-width="1"/><path d="M15 2V28M2 15H28" stroke="#45494b"/>` },
];

const TRASH = `<path d="M7 10h16l-1.5 14q-6.500 3-13 0z" fill="#83878a"/><ellipse cx="15" cy="9.5" rx="8.5" ry="3" fill="#33383a" stroke="#c4c7c9" stroke-width="1.3"/><path d="M10 13l.6 10M13.300 14v10M16.700 14v10M20 13l-.6 10" stroke="#5e6264"/>`;

@customElement("dock-bar")
export class DockBar extends LitElement {
  static styles = css`
    :host { box-sizing: border-box; display: flex; flex-direction: column; width: 41px; height: 1056px; padding: 5px 0 6px; gap: 5px; background: linear-gradient(90deg, #2b3032, #30373a 90%, #1e2223 99%); }
    .row { display: grid; grid-template-columns: 5px 30px 5px; align-items: center; height: 30px; }
    .row.trash { margin-top: auto; }
    .tile { height: 30px; border-radius: 3px; box-shadow: inset 0 0 0 1px rgba(255, 255, 255, .16); background-image: linear-gradient(rgba(255, 255, 255, .22), rgba(255, 255, 255, 0) 45%, rgba(0, 0, 0, .12)); }
    svg { display: block; }
  `;
  render() {
    const pip = (on?: boolean, flip = false) =>
      html`<div>${on ? pic(5, 6, flip ? `<path d="M4 0V6L1 3z" fill="#ddd"/>` : `<path d="M0 0V6L3 3z" fill="#ddd"/>`) : ""}</div>`;
    return html`${TILES.map(
        (t) => html`<div class="row">${pip(t.left)}
          <div class="tile" style="background-color:${t.bg}">${pic(30, 30, t.art)}</div>
          ${pip(t.right, true)}</div>`
      )}
      <div class="row trash"><div></div><div class="tile" style="background-color:#45494b">${pic(30, 30, TRASH)}</div></div>`;
  }
}

/* -------------------------------------------------------------- browser */

@customElement("browser-chrome")
export class BrowserChrome extends LitElement {
  static styles = css`
    :host { display: block; font: 14px/18px "Open Sans", "Noto Sans", sans-serif; color: #3f3f3c; }
    svg { display: block; flex: none; }
    .strip { display: flex; align-items: flex-start; height: 29px; background: #3c3b37; box-sizing: border-box; border-bottom: 1px solid #2b2a28; color: #dfdbd2; }
    .tab { display: grid; align-items: center; height: 31px; }
    .one { grid-template-columns: 22px 160px 14px; padding-left: 24px; width: 200px; }
    .split { width: 1px; height: 22px; margin-top: 4px; background: #7b7973; }
    .two { grid-template-columns: 22px 159px 14px; padding-left: 9px; width: 199px; box-sizing: border-box; }
    .nv { width: 16px; height: 14px; background: #33302e; color: #f26a10; font: 800 9px/13px "Open Sans", sans-serif; }
    .active { display: grid; }
    .active > * { grid-area: 1 / 1; }
    .active .in { display: grid; grid-template-columns: 182px 12px; align-items: center; padding-left: 20px; color: #4a4a48; height: 31px; }
    .plus { margin: 8px 0 0 -1px; }
    .nav { display: grid; grid-template-columns: 1106px 7px 316px 10px 440px; height: 42px; align-items: center; background: #f7f7f5; }
    .where { display: flex; align-items: center; height: 42px; }
    .back { z-index: 1; margin-left: 4px; }
    .url { box-sizing: border-box; display: flex; align-items: center; height: 24px; width: 1078px; margin-left: -8px; padding-left: 12px; border: 1px solid #adaca6; border-radius: 2px; background: #fff; color: #9b9b99; }
    .url .site { color: #2f2f2d; }
    .bar { width: 1px; height: 16px; background: #c9c9c6; }
    .url .g { margin: 0 5px 0 0; }
    .url .addr { margin-left: 5px; width: 1006px; padding-top: 1px; display: flex; }
    .url .re { margin-left: 8px; }
    .find { box-sizing: border-box; display: grid; grid-template-columns: 18px 1fr 14px; padding: 0 0 0 5px; align-items: center; height: 24px; border: 1px solid #adaca6; border-radius: 2px; background: #fff; }
    .find fit-text { padding-top: 1px; }
    .tools { display: grid; grid-template-columns: 24px 8px 22px 54px 22px 38px 8px 8px 50px 26px 20px 36px 44px 32px 12px 30px; align-items: center; justify-items: center; }
    .tools .late { padding-left: 16px; }
    .tools .bar { height: 20px; }
    .tools .tall { height: 34px; background: #dadad7; }
    .marks { box-sizing: border-box; display: flex; align-items: center; height: 32px; padding: 0 0 1px 3px; background: #f7f7f5; border-bottom: 1px solid #a9aaa4; }
    .marks .a { margin-right: 2px; }
    .marks .t { margin: 2px 0 0 4px; }
    .m1 { margin-left: 17px; }
    .m3 { margin-left: 13px; }
    .m4 { margin-left: 15px; }
    .lead { margin-left: 3px; }
    .nm { font: 8px/10px "Open Sans", sans-serif; color: #777; margin-right: 3px; }
  `;
  render() {
    return html`
      <div class="strip">
        <div class="tab one"><span class="nv"><fit-text w="15">nv2</fit-text></span><fit-text w="89">IHM Navitia 2</fit-text>${CLOSE("#e3e0d8")}</div>
        <div class="split"></div>
        <div class="tab two">
          ${pic(16, 16, `<path d="M3 2 8 8 13 2M8 8 2.5 13M8 8 13.500 13" stroke="#0d3a78" stroke-width="3"/><path d="M1 13h4M11 13h4" stroke="#0d3a78" stroke-width="2.5"/><circle cx="8" cy="2.5" r="1.8" fill="#0d3a78"/>`)}
          <fit-text w="142">Pitch day APiHM - S...</fit-text>${CLOSE("#e3e0d8")}</div>
        <div class="active">
          ${pic(232, 29, `<path d="M0 29Q7 29 9 20 11 2 19 2H211Q219 2 221 13 223 29 232 29z" fill="#f7f7f5"/>`)}
          <div class="in"><fit-text w="171">http://datas...rage=fr-idf</fit-text>${CLOSE("#5d5d5a")}</div>
        </div>
        <div class="plus">${pic(16, 16, `<path d="M5.5 .5h5v5h5v5h-5v5h-5v-5h-5v-5h5z" fill="#b3d145" stroke="#6f9a28"/><path d="M6.5 2h3v4.500h4.500" stroke="#e0ee9a"/>`)}</div>
      </div>
      <div class="nav">
        <div class="where">
          <div class="back">${pic(32, 32, `<circle cx="16" cy="16" r="15.5" fill="#fcfcfb" stroke="#9f9e98"/><path d="M22.5 16H11M16 10l-6 6 6 6" stroke="#4d4d4b" stroke-width="3"/>`)}</div>
          <div class="url"><div class="g">${GLOBE()}</div><div class="bar"></div>
            <div class="addr"><fit-text w="54">datasrv.</fit-text><fit-text class="site" w="85.5">canaltp.local</fit-text><fit-text w="480">/navitia-explorer/journey.html?ws_name=api.navitia.io&amp;coverage=fr-idf</fit-text></div>
            <div class="bar"></div>
            <div class="re">${pic(14, 14, `<path d="M11 9.500A4.800 4.800 0 1 1 10.500 4" stroke="#8b99a8" stroke-width="2.2"/><path d="M12.5 1V6.500H7z" fill="#8b99a8"/>`)}</div>
          </div>
        </div>
        <div></div>
        <div class="find">${pic(14, 14, `<circle cx="5.5" cy="5.5" r="4" stroke="#8f8f8c" stroke-width="2"/><path d="M8.5 8.500 13 13" stroke="#8f8f8c" stroke-width="2.4"/>`)}<fit-text w="132">multi row not found</fit-text>
          ${pic(12, 12, `<path d="M0 6H9M5.500 1.500 10 6 5.500 10.500" stroke="#8593a3" stroke-width="1.9"/>`)}</div>
        <div></div>
        <div class="tools">
          ${pic(17, 16, `<path d="M8.5 1.500 10.600 6 15.500 6.500 12 10 13 14.800 8.500 12.300 4 14.800 5 10 1.500 6.500 6.400 6z" stroke="#4f4f4d" stroke-width="1.7"/>`)}
          <div class="bar"></div>
          ${pic(15, 16, `<path d="M1.5 3.500h12v11.500h-12z" stroke="#4f4f4d" stroke-width="1.8"/><path d="M4.5 2.500Q7.500-1 10.500 2.500V5H4.500z" fill="#4f4f4d"/><path d="M4 7.500h1.500M7 7.500h4.500M4 9.900h1.500M7 9.900h4.500M4 12.300h1.500M7 12.300h4.500" stroke="#4f4f4d" stroke-width="1.300"/>`)}
          ${pic(14, 14, `<path d="M4.5 0h5v6.500H14L7 14 0 6.500h4.500z" fill="#5d5d5b"/>`)}
          ${pic(14, 16, `<circle cx="4.5" cy="4" r="3.6" fill="#cfcfcd" stroke="#999" stroke-width=".8"/><circle cx="4.5" cy="11.5" r="3.8" fill="#b5b5b3" stroke="#888" stroke-width=".8"/><circle cx="10" cy="7.5" r="3.7" fill="#4b4b4a"/><circle cx="3.7" cy="3" r="1.3" fill="#fff"/>`)}
          <div class="late">${pic(12, 16, `<rect x=".5" y=".5" width="11" height="15" fill="#8e8e8c" stroke="#777"/><path d="M1 2h10" stroke="#333" stroke-width="3"/><path d="M3.5 5v10M6 5v10M8.500 5v10" stroke="#d0d0ce"/>`)}</div>
          <div class="bar"></div>
          ${TRI}
          ${pic(14, 16, `<path d="M4 3.500H13" stroke="#10a010" stroke-width="2"/><path d="M5 0V7L0 3.500z" fill="#10a010"/><path d="M1 13H10" stroke="#f21414" stroke-width="2"/><path d="M8.5 9.500V16L13.500 13z" fill="#f21414"/>`)}
          ${pic(17, 17, `<path d="M5 0H12L17 5V12L12 17H5L0 12V5z" fill="#c8070a"/><text x="1" y="11.8" textLength="15" lengthAdjust="spacingAndGlyphs" font-family="Open Sans" font-weight="800" font-size="8.5" fill="#fff">ABP</text>`)}
          ${TRI}
          ${pic(14, 14, `<rect width="14" height="14" rx="1.5" fill="#d3191f"/><path d="M7 3V11M3.500 5 10.500 9M10.500 5 3.500 9" stroke="#fff" stroke-width="2.2"/>`)}
          ${pic(16, 16, `<rect width="16" height="16" fill="#474747"/><path d="M4 5V3.800H12V5M8 4V12.500M6.300 12.500h3.400" stroke="#e4e4e4" stroke-width="1.7"/>`)}
          ${pic(16, 16, `<rect width="16" height="16" rx="1" fill="#bf1318"/><path d="M11.5 3Q8.500 3 8 7T4.500 13M6 8.500H10.500" stroke="#fff" stroke-width="1.7"/>`)}
          <div class="bar tall"></div>
          ${pic(16, 14, `<path d="M1 2H15M1 7H15M1 12H15" stroke="#51514f" stroke-width="2.8" stroke-linecap="round"/>`)}
        </div>
      </div>
      <div class="marks">
        <div class="a lead">${pic(15, 15, `<path d="M.8 1.500h4.500l1.500 2h7.500V14.200H.8z" fill="#fbe3c8" stroke="#d8711a" stroke-width="1.5"/><circle cx="7.5" cy="9" r="3.2" stroke="#d8711a" stroke-width="1.5"/><circle cx="7.5" cy="9" r="1" fill="#d8711a"/>`)}</div>
        <fit-text w="85">Most Visited</fit-text><div class="t">${TRI}</div>
        <div class="a m1">${GLOBE()}</div><fit-text w="103">Getting Started</fit-text>
        <div class="a m3">${GLOBE()}</div><fit-text w="107">navitia-explorer</fit-text>
        <div class="m3">${pic(16, 15, `<path d="M.5 14.500V1h5l1 2" stroke="#aaa"/><path d="M2 3.500H15.500V14.500H2z" fill="#ea6a2a"/><path d="M3 4.500H15V8H3z" fill="#f9a571"/><path d="M2 3.500v11" stroke="#a8491a"/>`)}</div>
        <fit-text w="84">new_default</fit-text><div class="t">${TRI}</div>
        <span class="m4 nm"><fit-text w="16">nmm</fit-text></span><fit-text w="37">NMM</fit-text>
      </div>`;
  }
}

/* ----------------------------------------------------------------- page */

const NAV = ["Coverage", "Tyr", "Places", "itinéraire", "Exploration", "Horaires de ligne", "Horaires à l'arrêt", "Nearby", "TT - Arrêt"];
const UPDOWN = pic(6, 12, `<path d="M.5 3.500 3 .5 5.500 3.500zM.5 9h5L3 12z" fill="#666"/>`);

@customElement("explorer-page")
export class ExplorerPage extends LitElement {
  static styles = css`
    :host { display: block; background: #fff; color: #000; font: 16px/20px "Liberation Sans", Arial, sans-serif; height: 953px; overflow: hidden; }
    svg { display: block; flex: none; }
    .home { height: 21px; padding: 8px 0 0 8px; box-sizing: border-box; font-size: 10.3px; line-height: 13px; color: #00e; }
    .home a { text-decoration: underline; }
    .menu { display: flex; height: 50px; padding-left: 10px; gap: 2px; }
    .item { box-sizing: border-box; width: 114px; height: 27px; border: 2px solid; border-color: #dcdcdc #666 #666 #dcdcdc; font-size: 10px; line-height: 24px; text-align: center; }
    .picks { display: grid; gap: 2px; align-content: start; padding-top: 1px; margin-left: -1px; }
    .ui { font-family: "Open Sans", "Noto Sans", sans-serif; font-size: 14px; color: #4c4c4c; }
    .pick { box-sizing: border-box; display: flex; align-items: center; justify-content: space-between; height: 23px; padding: 1px 6px 0 5px; border: 1px solid #a9a9a6; border-radius: 4px; background: linear-gradient(#fdfdfd, #ededeb); }
    .p1 { width: 116px; }
    .p2 { width: 132px; }
    h1 { margin: 0; height: 28px; padding: 2px 0 0 2px; box-sizing: border-box; text-align: center; font-size: 20px; line-height: 23px; }
    .form { display: grid; grid-template-columns: 314px 148px 120px; padding: 2px 0 0 11px; height: 64px; box-sizing: border-box; align-content: start; }
    .line { display: flex; align-items: center; height: 24px; margin-bottom: 1px; }
    .line > fit-text { padding-top: 1px; }
    .box { box-sizing: border-box; height: 23px; border: 1px solid #a9a9a6; border-radius: 3px; background: #fff; }
    .from { display: flex; justify-content: flex-end; align-items: center; margin-left: 4px; width: 235px; height: 24px; border: 0; border-top: 2px solid #a6a6a6; border-left: 2px solid #a6a6a6; border-radius: 0; padding-right: 4px; }
    .to { margin-left: 4px; width: 234px; }
    .val { padding: 1px 0 0 2px; margin-left: 5px; line-height: 20px; }
    .day { width: 99px; }
    .hour { width: 63px; margin-left: 4px; }
    .opt { display: flex; align-items: center; gap: 5px; height: 22px; }
    .opt + .opt { margin-top: -1px; }
    .opt svg { margin-top: -1px; }
    .adv { height: 34px; padding: 1px 0 0 8px; box-sizing: border-box; font-weight: bold; font-size: 12px; }
    .acts { display: flex; gap: 14px; padding-left: 12px; height: 27px; }
    .act { box-sizing: border-box; height: 23px; padding: 1px 10px 0; line-height: 20px; border: 1px solid #a9a9a6; border-radius: 4px; background: linear-gradient(#fdfdfd, #ebebe8); }
    .board { display: grid; grid-template-columns: 928px 927px; gap: 2px; padding: 2px; margin-left: 8px; width: 1863px; height: 500px; box-sizing: border-box; border: 1px solid; border-color: #b8b8b8 #55555a #55555a #b8b8b8; }
    .cell { box-sizing: border-box; border: 1px solid; border-color: #4e4e52 #b8b8b8 #b8b8b8 #4e4e52; padding: 1px; }
    .foot { display: grid; justify-items: center; padding-top: 10px; font-size: 14px; line-height: 18px; }
    .foot a { color: #551a8b; text-decoration: underline; }
    .logos { display: flex; gap: 4px; height: 31px; }
    .nt { display: flex; align-items: center; justify-content: space-between; box-sizing: border-box; width: 100px; height: 31px; border-radius: 4px; padding: 0 8px 1px 10px; background: #426b96; color: #fff; font: bold 15px/20px "Open Sans", sans-serif; }
    .ctp { font: italic 900 29px/25px "Lato", sans-serif; color: #0b0c0e; }
  `;
  render() {
    return html`
      <div class="home"><fit-text w="72"><a>Navitia Explorer</a></fit-text></div>
      <div class="menu">
        ${NAV.map((n) => html`<div class="item">${n}</div>`)}
        <div class="picks ui">
          <div class="pick p1"><fit-text w="87">api.navitia.io</fit-text>${UPDOWN}</div>
          <div class="pick p2"><fit-text w="36">fr-idf</fit-text>${UPDOWN}</div>
        </div>
      </div>
      <h1><fit-text w="340">Recherche/diagnostique d'itinéraire</fit-text></h1>
      <div class="form">
        <div>
          <div class="line"><fit-text w="56">Départ :</fit-text><div class="box from">${pic(12, 13, `<rect x=".8" y=".8" width="10.4" height="11.4" rx="1" stroke="#888" stroke-width="1.5"/><circle cx="6" cy="4.5" r="1.5" fill="#888"/><path d="M3.5 7.500h5M3.500 9.500h5" stroke="#888" stroke-width="1.5"/>`)}</div></div>
          <div class="line"><fit-text w="60">Arrivée :</fit-text><div class="box to"></div></div>
        </div>
        <div>
          <div class="line"><fit-text w="39">date :</fit-text><div class="box val ui day"><fit-text w="77">16/02/2016</fit-text></div></div>
          <div class="line"><fit-text w="50">heure :</fit-text><div class="box val ui hour"><fit-text w="40">22h28</fit-text></div></div>
        </div>
        <div>
          <div class="opt"><fit-text w="82">Partir après</fit-text>${pic(13, 13, `<circle cx="6.5" cy="6.5" r="6" fill="#ec7d55" stroke="#b5532f"/><circle cx="6.5" cy="6.5" r="2.3" fill="#6b2c17"/>`)}</div>
          <div class="opt"><fit-text w="90">Arriver avant</fit-text>${pic(13, 13, `<circle cx="6.5" cy="6.5" r="6" fill="#fff" stroke="#9c9c9a"/>`)}</div>
        </div>
      </div>
      <div class="adv"><fit-text w="118.5">Paramètres avancés</fit-text></div>
      <div class="acts ui">
        <div class="act"><fit-text w="98">Recherche (F9)</fit-text></div>
        <div class="act"><fit-text w="142">Partir lundi à 9h (F10)</fit-text></div>
      </div>
      <div class="board"><div class="cell"></div><div class="cell"><area-map></area-map></div></div>
      <div class="foot">
        <fit-text w="195">github: <a>canaltp/navitia-explorer</a></fit-text>
        <div class="logos">
          <div class="nt"><fit-text w="52">Navitia</fit-text>${pic(21, 21, `<circle cx="10.5" cy="10.5" r="10" fill="#8fb3cd"/><path d="M18 2Q8 2 6 9 5 16 10 17 15 17 17 12" stroke="#fff" stroke-width="3.5"/><path d="M1 12Q8 4 19 1" stroke="#426b96" stroke-width="1.5"/>`)}</div>
          <fit-text class="ctp" w="101">canal tp</fit-text>
        </div>
      </div>`;
  }
}

/* ----------------------------------------------------------------- desktop */

@customElement("app-root")
export class AppRoot extends LitElement {
  static styles = css`
    :host { display: block; width: 1920px; height: 1080px; overflow: hidden; background: #fff; }
    svg { display: block; flex: none; }
    .panel { display: flex; justify-content: space-between; align-items: center; height: 24px; background: linear-gradient(#5f5b50, #56534b 15%, #3f3e39); color: #dfdbd2; font: 14px/20px "Open Sans", "Noto Sans", sans-serif; }
    .left { display: flex; align-items: center; gap: 3px; padding-left: 6px; font-weight: bold; }
    .left fit-text { margin-left: 12px; }
    .right { display: grid; grid-template-columns: 124px 71px 35px 22px 34px 36px 10px 66px 25px; align-items: center; }
    .desk { display: grid; grid-template-columns: 41px 1879px; }
  `;
  render() {
    const blue = Array.from({ length: 13 }, (_, i) => `<rect x="${84 + i * 3}" y="${20 - (i % 4 === 3 ? 1 : 0)}" width="1.5" height="3" fill="#a9c8f5"/>`).join("");
    const graph = `<path d="M0 22.500h4M12 22.500h3M13 21v2M30 22.500h2M35 22.500h3M31 21v2" stroke="#f0a010" stroke-width="1.2"/><path d="M34 20v2" stroke="#3a3" /><rect x="42" y="9" width="40" height="1" fill="#222"/><rect x="42" y="10" width="40" height="5" fill="#f00"/><rect x="42" y="15" width="40" height="8" fill="#2e8b57"/>${blue}<path d="M115 23V16l2-4 2 4V23z" fill="#1212ee"/><path d="M117 20v3" stroke="#8fd0f0" stroke-width="2"/>`;
    const dot = (fill: string, glyph: string) =>
      pic(16, 16, `<circle cx="8" cy="8" r="7.5" fill="${fill}" stroke="#33312d"/>${glyph}`);
    return html`
      <div class="panel">
        <div class="left">
          ${dot("#ee5a2a", `<path d="M5.5 5.500 10.500 10.500M10.500 5.500 5.500 10.500" stroke="#4b1c0d" stroke-width="1.2"/>`)}
          ${dot("#7d7a72", `<path d="M5 8H11" stroke="#33312d" stroke-width="1.3"/>`)}
          ${dot("#7d7a72", `<rect x="5" y="5.5" width="6" height="5" stroke="#33312d" stroke-width="1.2"/>`)}
          <fit-text w="105">Mozilla Firefox</fit-text>
        </div>
        <div class="right">
          ${pic(124, 24, graph)}
          ${pic(71, 24, `<path d="M54 9.500Q63 2.500 72 9.500M56.500 12.500Q63 7.500 69.500 12.500M59 15.300Q63 12.500 67 15.300" stroke="#a9a69e" stroke-width="1.9"/><path d="M61 17.200h4l-2 2z" fill="#dfdbd2"/>`)}
          ${pic(35, 24, `<path d="M14 8.500 21 15.500 17.500 19V5L21 8.500 14 15.500" stroke="#dfdbd2" stroke-width="1.5"/>`)}
          ${pic(20, 24, `<rect x="0" y="6" width="18" height="12" fill="#dfdbd2"/><path d="M1 7l8 6 8-6M1 17l5.500-5.500M17 17l-5.500-5.500" stroke="#55524a" stroke-width="1.3"/>`)}
          ${pic(34, 24, `<rect x="10.8" y="6.8" width="20" height="10.5" rx="1" stroke="#dfdbd2" stroke-width="1.5"/><rect x="13" y="9" width="12" height="6.2" fill="#dfdbd2"/><path d="M32.500 9.500v5" stroke="#dfdbd2" stroke-width="2"/>`)}
          ${pic(36, 24, `<path d="M12 9.500h3l4-3.500v12l-4-3.500h-3z" fill="#dfdbd2"/><path d="M21.5 8.500q2.500 3.500 0 7" stroke="#dfdbd2" stroke-width="1.5"/><path d="M24.5 6.500q4 5.500 0 11M27.500 5q5 7 0 14" stroke="#8b8880" stroke-width="1.4"/>`)}
          <div></div>
          <fit-text w="55">22:29:51</fit-text>
          ${pic(20, 24, `<circle cx="9" cy="12.5" r="4.8" stroke="#dfdbd2" stroke-width="2"/><circle cx="9" cy="12.5" r="6.8" stroke="#dfdbd2" stroke-width="2" stroke-dasharray="2.34 3"/><path d="M9 4V12" stroke="#4c4a43" stroke-width="4"/><path d="M9 5V12" stroke="#dfdbd2" stroke-width="1.8"/>`)}
        </div>
      </div>
      <div class="desk">
        <dock-bar></dock-bar>
        <div><browser-chrome></browser-chrome><explorer-page></explorer-page></div>
      </div>`;
  }
}
